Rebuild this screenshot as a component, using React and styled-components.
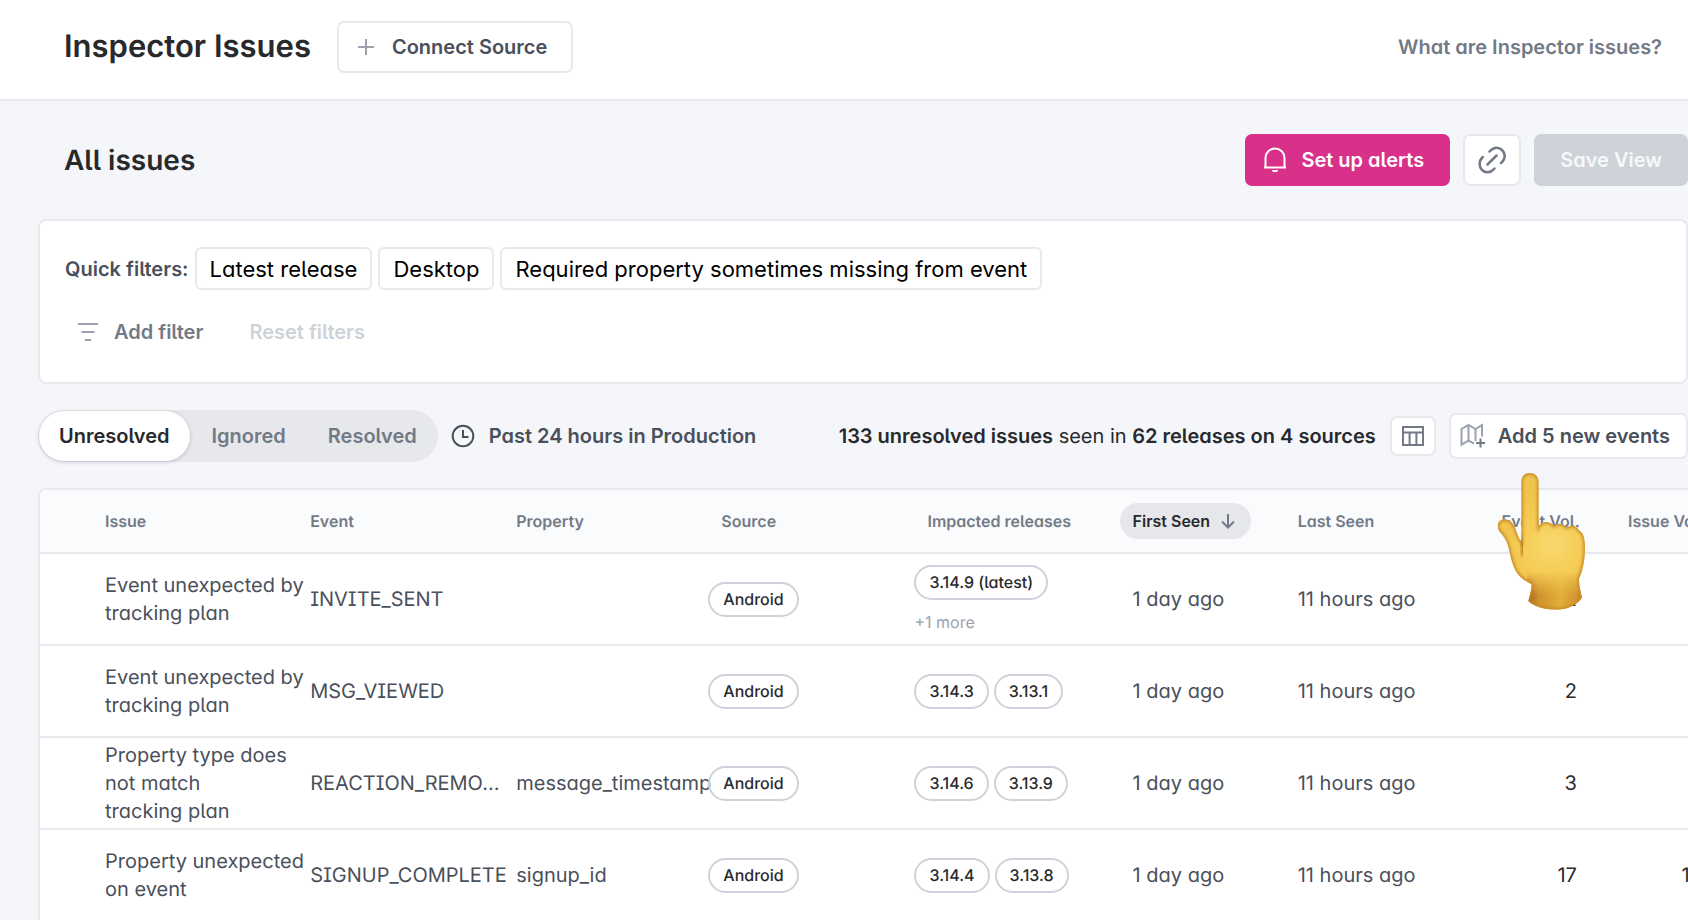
import React from "react";
import styled, { createGlobalStyle, css } from "styled-components";

const color = {
  ink: "#28292c",
  text: "#4a505b",
  muted: "#727a86",
  faint: "#9ba2ad",
  disabled: "#ced2d9",
  line: "#e8e9ed",
  tagLine: "#ced2da",
  canvas: "#f5f6fa",
  head: "#fafbfd",
  pink: "#d9308a",
};

const Global = createGlobalStyle`
  *, *::before, *::after { box-sizing: border-box; }
  html, body { margin: 0; padding: 0; }
  body {
    background: ${color.canvas};
    color: ${color.text};
    font-family: Inter, "Liberation Sans", sans-serif;
    font-size: 20px;
    line-height: 28px;
    font-feature-settings: "cv11", "cv05";
    text-rendering: geometricPrecision;
    -webkit-font-smoothing: antialiased;
    overflow: hidden;
  }
  button { font: inherit; font-feature-settings: inherit; color: inherit; margin: 0; cursor: pointer; }
  svg { display: block; flex: none; }
`;

const Page = styled.div`
  min-height: 100vh;
`;

const Header = styled.header`
  display: flex;
  align-items: center;
  height: 101px;
  padding: 0 26px 5px 64px;
  background: #fff;
  border-bottom: 2px solid ${color.line};
`;

const PageTitle = styled.h1`
  margin: 0 26px 0 0;
  font-size: 31px;
  line-height: 40px;
  font-weight: 600;
  color: ${color.ink};
`;

const HelpLink = styled.a`
  margin-left: auto;
  font-weight: 600;
  color: ${color.muted};
  text-decoration: none;
`;

const Button = styled.button`
  display: inline-flex;
  align-items: center;
  justify-content: center;
  height: 52px;
  padding: 0 24px;
  border: 2px solid ${color.line};
  border-radius: 7px;
  background: #fff;
  font-weight: 600;
  white-space: nowrap;

  ${(p) =>
    p.$tone === "primary" &&
    css`
      padding: 0 24px 0 16px;
      gap: 14px;
      background: ${color.pink};
      border-color: ${color.pink};
      color: #fff;
    `}
  ${(p) =>
    p.$tone === "disabled" &&
    css`
      background: ${color.disabled};
      border-color: ${color.disabled};
      color: #f7f8fa;
    `}
`;

const ConnectButton = styled(Button)`
  padding: 0 24px 0 18px;
  gap: 17px;
`;

const SquareButton = styled(Button)`
  width: ${(p) => p.$w}px;
  height: ${(p) => p.$h}px;
  padding: 0;
  color: ${color.muted};
`;

const Main = styled.main`
  padding-left: 38px;
`;

const TitleRow = styled.div`
  display: flex;
  align-items: center;
  gap: 13px;
  padding: 33px 0 33px 26px;
`;

const ViewTitle = styled.h2`
  margin: 0 auto 0 0;
  font-size: 28px;
  line-height: 36px;
  font-weight: 600;
  color: ${color.ink};
`;

const FilterPanel = styled.section`
  padding: 26px 25px 24px;
  border: 2px solid ${color.line};
  border-radius: 8px;
  background: #fff;
`;

const QuickRow = styled.div`
  display: flex;
  align-items: center;
  gap: 6px;
`;

const QuickLabel = styled.span`
  font-weight: 600;
`;

const Chip = styled.button`
  height: 43px;
  padding: 0 13px;
  border: 2px solid ${color.line};
  border-radius: 6px;
  background: #fff;
  && { color: #000; font-size: 22px; }
`;

const FilterActions = styled.div`
  display: flex;
  align-items: center;
  gap: 46px;
  padding: 28px 0 12px 13px;
`;

const TextButton = styled.button`
  display: inline-flex;
  align-items: center;
  gap: 16px;
  padding: 0;
  border: 0;
  background: none;
  && { font-weight: 600; color: ${(p) => (p.disabled ? color.disabled : color.muted)}; }
`;

const Toolbar = styled.div`
  display: flex;
  align-items: center;
  padding: 26px 0;
`;

const Segments = styled.div`
  display: flex;
  align-items: center;
  gap: 2px;
  height: 52px;
  padding: 1px;
  border-radius: 26px;
  background: #e7e8ec;
`;

const Segment = styled.button`
  height: 50px;
  padding: 0 20px;
  border: 0;
  border-radius: 25px;
  background: transparent;
  && { font-weight: 600; color: ${color.muted}; }

  ${(p) =>
    p["aria-pressed"] &&
    css`
      background: #fff;
      box-shadow: 0 1px 4px rgba(20, 24, 40, 0.2);
      && { color: ${color.ink}; }
    `}
`;

const Period = styled.button`
  display: inline-flex;
  align-items: center;
  gap: 14px;
  margin-left: 13px;
  padding: 0;
  border: 0;
  background: none;
  && { font-weight: 600; }
`;

const Summary = styled.p`
  margin: 0 14px 0 auto;
  color: ${color.ink};
  white-space: nowrap;
  strong { font-weight: 600; }
`;

const AddWrap = styled.div`
  position: relative;
  margin-left: 13px;
`;

const AddButton = styled(Button)`
  height: 46px;
  padding: 0 16px 0 9px;
  gap: 12px;
`;

const Pointer = styled.svg`
  position: absolute;
  z-index: 2;
  left: 48px;
  top: 60px;
  pointer-events: none;
`;

const TableFrame = styled.div`
  overflow: hidden;
  border: 2px solid ${color.line};
  border-right: 0;
  border-radius: 8px 0 0 0;
  background: #fff;
`;

const Table = styled.table`
  width: 100%;
  min-width: 1677px;
  table-layout: fixed;
  border-collapse: collapse;
`;

const Th = styled.th`
  height: 63px;
  padding: 0 ${(p) => (p.$end ? 13 : 0)}px 0 0;
  background: ${color.head};
  border-bottom: 2px solid ${color.line};
  text-align: ${(p) => (p.$end ? "right" : "left")};
  font-size: 16px;
  line-height: 24px;
  font-weight: 600;
  color: ${color.muted};
  white-space: nowrap;
`;

const SortPill = styled.button`
  display: inline-flex;
  align-items: center;
  gap: 11px;
  height: 36px;
  margin-left: -13px;
  padding: 0 16px 0 13px;
  border: 0;
  border-radius: 18px;
  background: #e6e7eb;
  && { color: ${color.ink}; }
`;

const Td = styled.td`
  height: 92px;
  padding: 0 ${(p) => (p.$end ? 16 : 0)}px 0 0;
  border-bottom: 2px solid ${color.line};
  text-align: ${(p) => (p.$end ? "right" : "left")};
  color: ${(p) => (p.$end ? color.ink : color.text)};
`;

const EventName = styled.div`
  margin-right: 8px;
  overflow: hidden;
  text-overflow: ellipsis;
  white-space: nowrap;
  font-feature-settings: "cv11", "cv05", "cv08";
`;

const Tags = styled.div`
  display: flex;
  flex-wrap: wrap;
  gap: 5px;
  margin-left: -13px;
`;

const Tag = styled.span`
  height: 35px;
  padding: 0 13px;
  border: 2px solid ${color.tagLine};
  border-radius: 18px;
  font-size: 16px;
  line-height: 30px;
  font-weight: 500;
  color: ${color.ink};
`;

const More = styled.div`
  margin: 10px 0 0 -13px;
  font-size: 16px;
  line-height: 24px;
  color: ${color.faint};
`;

const PlusIcon = () => (
  <svg width="18" height="18" viewBox="0 0 18 18" fill="none" stroke={color.faint} strokeWidth="2" aria-hidden="true">
    <path d="M9 1v16M1 9h16" />
  </svg>
);

const BellIcon = () => (
  <svg width="24" height="26" viewBox="0 0 24 26" fill="none" stroke="#fff" strokeWidth="2" aria-hidden="true">
    <path d="M2.5 20V11a9.500 9.500 0 0 1 19 0v9" />
    <path d="M1 20.500h22" />
    <path d="M9 23h6a3 2.200 0 0 1-6 0z" fill="#fff" stroke="none" />
  </svg>
);

const LinkIcon = () => (
  <svg width="28" height="28" viewBox="0 0 28 28" fill="none" stroke="currentColor" strokeWidth="2.500" strokeLinecap="round" aria-hidden="true">
    <path d="M9.500 18.500l9-9" />
    <path d="M11.500 5.500C16 .2 21 1 24 4s4.600 8-1 13.200" />
    <path d="M16.500 22.500c-4.500 5.300-9.500 4.500-12.500 1.500s-3.600-9 .8-13" />
  </svg>
);

const FilterIcon = () => (
  <svg width="20" height="20" viewBox="0 0 20 20" fill={color.faint} aria-hidden="true">
    <path d="M0 1h20v2H0zM3.500 9h13v2h-13zM6.700 17h6.600v2H6.700z" />
  </svg>
);

const ClockIcon = () => (
  <svg width="24" height="24" viewBox="0 0 24 24" fill="none" stroke="currentColor" strokeWidth="2" aria-hidden="true">
    <circle cx="12" cy="12" r="10.300" />
    <path d="M12 6v7h5.500" />
  </svg>
);

const ColumnsIcon = () => (
  <svg width="24" height="22" viewBox="0 0 24 22" fill="none" stroke="currentColor" strokeWidth="2" aria-hidden="true">
    <path d="M2 2h20v18H2zM2 7.500h20M8.600 7.500V20M15.400 7.500V20" />
  </svg>
);

const MapPlusIcon = () => (
  <svg width="26" height="26" viewBox="0 0 26 26" fill="none" stroke={color.faint} strokeWidth="2" aria-hidden="true">
    <path d="M14 20.500l-5.500-2.800-7 4V6l7-4 7 4 6.500-4v11.500" />
    <path d="M8.500 2v15.700M15.500 6v12" />
    <path d="M20.500 15.500v9M16 20h9" stroke={color.muted} />
  </svg>
);

const SortArrow = () => (
  <svg width="14" height="16" viewBox="0 0 14 16" fill="none" stroke={color.muted} strokeWidth="2" aria-hidden="true">
    <path d="M7 1v13M1 8.500l6 6 6-6" />
  </svg>
);

const handOutline =
  "M2 158C2 146 12 138 26 139C40 141 50 152 56 168C60 182 66 196 73 206L73 26C73 8 84 0 98 0C114 0 124 10 125 26L125 160C134 144 160 143 170 158C182 148 200 152 208 163C224 154 240 158 246 172C262 182 264 200 264 226C264 262 258 292 246 318C246 338 251 356 255 374C240 396 210 410 176 410C140 410 110 400 94 384C98 370 104 350 104 334C88 326 72 318 60 300C44 276 40 246 34 222C28 200 20 190 8 176C3 170 2 164 2 158Z";

const PointingHand = () => (
  <Pointer width="90" height="138" viewBox="0 0 270 414" aria-hidden="true">
    <defs>
      <clipPath id="handClip">
        <path d={handOutline} />
      </clipPath>
      <radialGradient id="palm" gradientUnits="userSpaceOnUse" cx="165" cy="215" r="150">
        <stop offset="0" stopColor="#f8d970" />
        <stop offset=".6" stopColor="#f5cc55" />
        <stop offset="1" stopColor="#f0c44e" />
      </radialGradient>
      <linearGradient id="wrist" x1="0" x2="1" y1="0" y2="0">
        <stop offset="0" stopColor="#a4591a" />
        <stop offset=".2" stopColor="#cf902e" />
        <stop offset=".6" stopColor="#e3af3b" />
        <stop offset="1" stopColor="#c8862a" />
      </linearGradient>
      <linearGradient id="wristMask" x1="0" x2="0" y1="0" y2="1">
        <stop offset="0" stopColor="#000" />
        <stop offset=".6" stopColor="#fff" />
      </linearGradient>
      <mask id="wristArea">
        <rect x="60" y="296" width="210" height="118" fill="url(#wristMask)" />
      </mask>
      <filter id="soft" x="-20%" y="-20%" width="140%" height="140%">
        <feGaussianBlur stdDeviation="5" />
      </filter>
    </defs>
    <g clipPath="url(#handClip)">
      <path d={handOutline} fill="url(#palm)" />
      <rect x="90" y="296" width="170" height="118" fill="url(#wrist)" mask="url(#wristArea)" />
      <path d={handOutline} fill="none" stroke="#c98a27" strokeWidth="10" filter="url(#soft)" />
      <path d="M72 196c4 20 6 34 4 54" fill="none" stroke="#a8701c" strokeWidth="6" filter="url(#soft)" />
      <path d="M74 180c2 22 3 42 2 64" fill="none" stroke="#b9781f" strokeWidth="2" opacity=".7" />
    </g>
  </Pointer>
);

const columns = [
  { label: "Issue", width: 205 },
  { label: "Event", width: 206 },
  { label: "Property", width: 205 },
  { label: "Source", width: 206 },
  { label: "Impacted releases", width: 205 },
  { label: "First Seen", width: 165, sorted: true },
  { label: "Last Seen", width: 165 },
  { label: "Event Vol.", width: 130, end: true },
  { label: "Issue Vol.", width: 124, end: true },
];

const issues = [
  { issue: ["Event unexpected by", "tracking plan"], event: "INVITE_SENT", property: "", releases: ["3.14.9 (latest)"], more: "+1 more", eventVol: 2, issueVol: "" },
  { issue: ["Event unexpected by", "tracking plan"], event: "MSG_VIEWED", property: "", releases: ["3.14.3", "3.13.1"], eventVol: 2, issueVol: "" },
  { issue: ["Property type does", "not match", "tracking plan"], event: "REACTION_REMOVED", property: "message_timestamp", releases: ["3.14.6", "3.13.9"], eventVol: 3, issueVol: "" },
  { issue: ["Property unexpected", "on event"], event: "SIGNUP_COMPLETE", property: "signup_id", releases: ["3.14.4", "3.13.8"], eventVol: 17, issueVol: 17 },
];

const quickFilters = ["Latest release", "Desktop", "Required property sometimes missing from event"];

export default function App() {
  return (
    <Page>
      <Global />
      <Header>
        <PageTitle>Inspector Issues</PageTitle>
        <ConnectButton type="button">
          <PlusIcon />
          Connect Source
        </ConnectButton>
        <HelpLink href="#help">What are Inspector issues?</HelpLink>
      </Header>
      <Main>
        <TitleRow>
          <ViewTitle>All issues</ViewTitle>
          <Button type="button" $tone="primary">
            <BellIcon />
            Set up alerts
          </Button>
          <SquareButton type="button" $w={58} $h={52} aria-label="Copy link">
            <LinkIcon />
          </SquareButton>
          <Button type="button" $tone="disabled" disabled>
            Save View
          </Button>
        </TitleRow>

        <FilterPanel>
          <QuickRow>
            <QuickLabel>Quick filters:</QuickLabel>
            {quickFilters.map((name) => (
              <Chip type="button" key={name}>{name}</Chip>
            ))}
          </QuickRow>
          <FilterActions>
            <TextButton type="button">
              <FilterIcon />
              Add filter
            </TextButton>
            <TextButton type="button" disabled>Reset filters</TextButton>
          </FilterActions>
        </FilterPanel>

        <Toolbar>
          <Segments role="group" aria-label="Issue status">
            <Segment type="button" aria-pressed={true}>Unresolved</Segment>
            <Segment type="button" aria-pressed={false}>Ignored</Segment>
            <Segment type="button" aria-pressed={false}>Resolved</Segment>
          </Segments>
          <Period type="button">
            <ClockIcon />
            Past 24 hours in Production
          </Period>
          <Summary>
            <strong>133 unresolved issues</strong> seen in <strong>62 releases on 4 sources</strong>
          </Summary>
          <SquareButton type="button" $w={46} $h={40} aria-label="Edit columns">
            <ColumnsIcon />
          </SquareButton>
          <AddWrap>
            <AddButton type="button">
              <MapPlusIcon />
              Add 5 new events
            </AddButton>
            <PointingHand />
          </AddWrap>
        </Toolbar>

        <TableFrame>
          <Table>
            <colgroup>
              <col width="65" />
              {columns.map((c) => (
                <col key={c.label} width={c.width} />
              ))}
            </colgroup>
            <thead>
              <tr>
                <Th as="td" />
                {columns.map((c) => (
                  <Th key={c.label} scope="col" $end={c.end} aria-sort={c.sorted ? "descending" : undefined}>
                    {c.sorted ? (
                      <SortPill type="button">
                        {c.label}
                        <SortArrow />
                      </SortPill>
                    ) : (
                      c.label
                    )}
                  </Th>
                ))}
              </tr>
            </thead>
            <tbody>
              {issues.map((row) => (
                <tr key={row.event}>
                  <Td />
                  <Td>
                    {row.issue.map((line, i) => (
                      <React.Fragment key={line}>
                        {i > 0 && <br />}
                        {line}
                      </React.Fragment>
                    ))}
                  </Td>
                  <Td><EventName>{row.event}</EventName></Td>
                  <Td>{row.property}</Td>
                  <Td><Tags><Tag>Android</Tag></Tags></Td>
                  <Td>
                    <Tags>
                      {row.releases.map((r) => (
                        <Tag key={r}>{r}</Tag>
                      ))}
                    </Tags>
                    {row.more && <More>{row.more}</More>}
                  </Td>
                  <Td>1 day ago</Td>
                  <Td>11 hours ago</Td>
                  <Td $end>{row.eventVol}</Td>
                  <Td $end>{row.issueVol}</Td>
                </tr>
              ))}
            </tbody>
          </Table>
        </TableFrame>
      </Main>
    </Page>
  );
}
